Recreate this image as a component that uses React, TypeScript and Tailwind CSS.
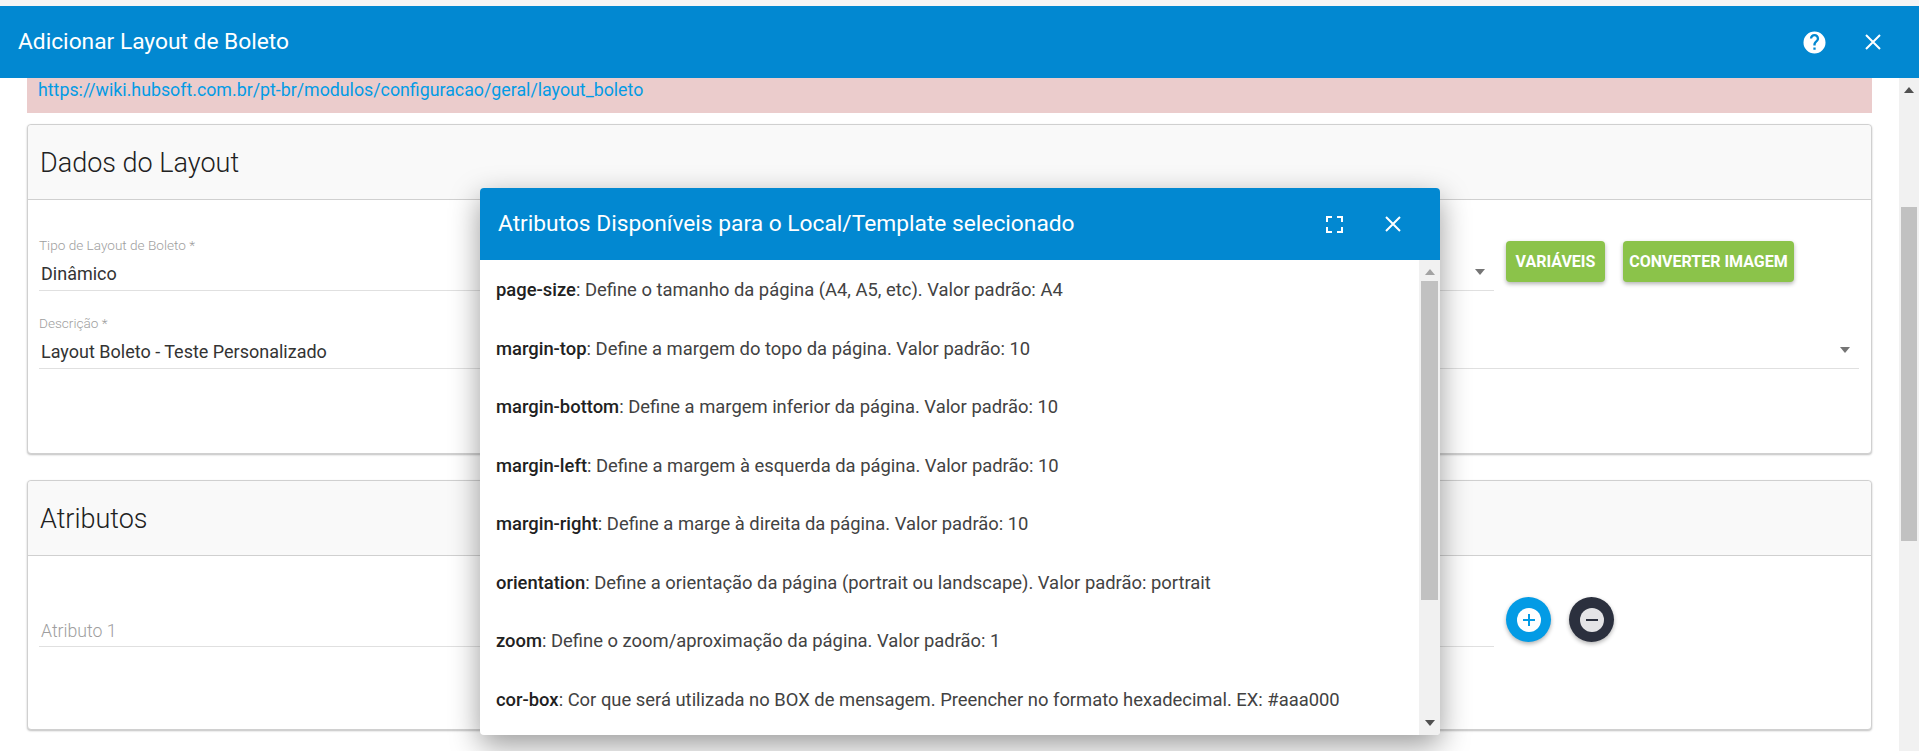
import React from "react";

const rows: [string, string][] = [
  ["page-size", ": Define o tamanho da página (A4, A5, etc). Valor padrão: A4"],
  ["margin-top", ": Define a margem do topo da página. Valor padrão: 10"],
  ["margin-bottom", ": Define a margem inferior da página. Valor padrão: 10"],
  ["margin-left", ": Define a margem à esquerda da página. Valor padrão: 10"],
  ["margin-right", ": Define a marge à direita da página. Valor padrão: 10"],
  ["orientation", ": Define a orientação da página (portrait ou landscape). Valor padrão: portrait"],
  ["zoom", ": Define o zoom/aproximação da página. Valor padrão: 1"],
  ["cor-box", ": Cor que será utilizada no BOX de mensagem. Preencher no formato hexadecimal. EX: #aaa000"],
];

function CloseIcon() {
  return (
    <svg width="16" height="16" viewBox="0 0 16 16" fill="none" stroke="white" strokeWidth="2">
      <path d="M1 1L15 15M15 1L1 15" />
    </svg>
  );
}

function HelpIcon() {
  return (
    <svg width="23" height="23" viewBox="0 0 24 24">
      <path fill="white" d="M12 0.5a11.5 11.5 0 1 0 0 23a11.5 11.5 0 0 0 0-23zM13.2 19.5h-2.4v-2.4h2.4zM15.7 10.6l-1.1 1.1c-.9.9-1.4 1.6-1.4 3.3h-2.4v-.6c0-1.3.5-2.5 1.4-3.4l1.5-1.5c.4-.4.7-1 .7-1.7 0-1.3-1.1-2.4-2.4-2.4s-2.4 1.1-2.4 2.4H7.2c0-2.7 2.1-4.8 4.8-4.8s4.8 2.1 4.8 4.8c0 1.1-.4 2-1.1 2.8z" fillRule="evenodd" />
    </svg>
  );
}

function Arrow({ up, color }: { up?: boolean; color: string }) {
  return (
    <svg width="10" height="6" viewBox="0 0 10 6" className="block">
      <path fill={color} d={up ? "M5 0L10 6H0Z" : "M0 0H10L5 6Z"} />
    </svg>
  );
}

function Card({ title, height, children }: { title: string; height: string; children: React.ReactNode }) {
  return (
    <section className={`${height} rounded border border-[#d0d0d0] bg-white shadow-[0_1px_2px_rgba(0,0,0,0.25)] flex flex-col`}>
      <div className="h-[75px] shrink-0 flex items-center pl-3 pt-[2px] bg-[#f9f9f9] border-b border-[#d0d0d0] rounded-t text-[27px] text-[#212121] font-light">
        {title}
      </div>
      {children}
    </section>
  );
}

function Field({ label, value, width }: { label: string; value: string; width: string }) {
  return (
    <div className={`${width} h-[54px] border-b border-[#e0e0e0] relative flex flex-col`}>
      <div className="text-[13.6px] leading-4 text-[#9e9e9e] font-light">{label}</div>
      <div className="pl-[2px] mt-[9px] text-[18px] leading-6 text-[#333]">{value}</div>
      <div className="absolute right-[9px] top-[32px]">
        <Arrow color="#757575" />
      </div>
    </div>
  );
}

export default function App() {
  return (
    <div className="relative h-[751px] w-[1919px] overflow-hidden bg-white font-['Roboto',sans-serif]">
      <div className="h-[6px] bg-[#f5f5f5]" />
      <header className="h-[72px] bg-[#0288d1] flex items-center justify-between pl-[18px] pr-[38px] text-white">
        <h1 className="text-[22.75px]">Adicionar Layout de Boleto</h1>
        <div className="flex items-center gap-[39px]">
          <HelpIcon />
          <CloseIcon />
        </div>
      </header>

      <div className="flex h-[673px]">
        <main className="w-[1899px] px-[27px] overflow-hidden">
          <div className="h-[35px] bg-[#ebcccc] pl-[11px] text-[17.8px] leading-6 text-[#039be5]">
            https://wiki.hubsoft.com.br/pt-br/modulos/configuracao/geral/layout_boleto
          </div>

          <div className="mt-[11px] flex flex-col gap-[26px]">
            <Card title="Dados do Layout" height="h-[330px]">
              <div className="pt-[37px] pl-[11px] pr-[12px] flex flex-col gap-[24px]">
                <div className="flex items-start">
                  <Field label="Tipo de Layout de Boleto *" value="Dinâmico" width="w-[1455px]" />
                  <button className="ml-[12px] mt-[4px] w-[99px] h-[41px] rounded bg-[#8bc34a] text-white text-[16px] font-bold shadow-[0_2px_4px_rgba(0,0,0,0.3)]">
                    VARIÁVEIS
                  </button>
                  <button className="ml-[18px] mt-[4px] w-[171px] h-[41px] rounded bg-[#8bc34a] text-white text-[16px] font-bold shadow-[0_2px_4px_rgba(0,0,0,0.3)]">
                    CONVERTER IMAGEM
                  </button>
                </div>
                <Field label="Descrição *" value="Layout Boleto - Teste Personalizado" width="w-full" />
              </div>
            </Card>

            <Card title="Atributos" height="h-[250px]">
              <div className="pt-[41px] pl-[11px] flex items-start">
                <div className="w-[1455px] h-[50px] border-b border-[#e0e0e0] flex items-end pb-[3px] pl-[2px] text-[17.7px] leading-6 font-light text-[#9e9e9e]">
                  Atributo 1
                </div>
                <button className="ml-[12px] w-[45px] h-[45px] rounded-full bg-[#039be5] flex items-center justify-center shadow-[0_2px_4px_rgba(0,0,0,0.3)]">
                  <svg width="24" height="24" viewBox="0 0 24 24">
                    <circle cx="12" cy="12" r="12" fill="white" />
                    <path d="M6 12H18M12 6V18" stroke="#039be5" strokeWidth="2" />
                  </svg>
                </button>
                <button className="ml-[18px] w-[45px] h-[45px] rounded-full bg-[#2b303e] flex items-center justify-center shadow-[0_2px_4px_rgba(0,0,0,0.3)]">
                  <svg width="24" height="24" viewBox="0 0 24 24">
                    <circle cx="12" cy="12" r="12" fill="#e4e4e6" />
                    <path d="M6 12H18" stroke="#2b303e" strokeWidth="2" />
                  </svg>
                </button>
              </div>
            </Card>
          </div>
        </main>

        <div className="w-[20px] bg-[#f1f1f1] flex flex-col items-center">
          <div className="h-[9px]" />
          <Arrow up color="#505050" />
          <div className="mt-[114px] w-[16px] h-[334px] bg-[#c1c1c1]" />
        </div>
      </div>

      <div className="absolute left-[480px] top-[188px] w-[960px] h-[547px] rounded bg-white overflow-hidden flex flex-col shadow-[0_10px_30px_rgba(0,0,0,0.4)]">
        <div className="h-[72px] shrink-0 bg-[#0288d1] flex items-center justify-between pl-[18px] pr-[39px] text-white">
          <h2 className="text-[22.75px]">Atributos Disponíveis para o Local/Template selecionado</h2>
          <div className="flex items-center gap-[42px]">
            <svg width="17" height="17" viewBox="0 0 17 17" fill="none" stroke="white" strokeWidth="2">
              <path d="M1 6V1H6M11 1H16V6M16 11V16H11M6 16H1V11" />
            </svg>
            <CloseIcon />
          </div>
        </div>
        <div className="flex flex-1 min-h-0">
          <div className="flex-1 pt-[18px] pl-[16px] flex flex-col gap-[34.5px] text-[18.4px] leading-6 text-[#424242] overflow-hidden">
            {rows.map(([k, v]) => (
              <p key={k} className="whitespace-nowrap">
                <span className="font-medium text-[#212121]">{k}</span>
                {v}
              </p>
            ))}
          </div>
          <div className="w-[21px] bg-[#f1f1f1] flex flex-col items-center">
            <div className="h-[9px]" />
            <Arrow up color="#a3a3a3" />
            <div className="mt-[6px] w-[17px] h-[319px] bg-[#c1c1c1]" />
            <div className="mt-auto mb-[9px]">
              <Arrow color="#505050" />
            </div>
          </div>
        </div>
      </div>
    </div>
  );
}
